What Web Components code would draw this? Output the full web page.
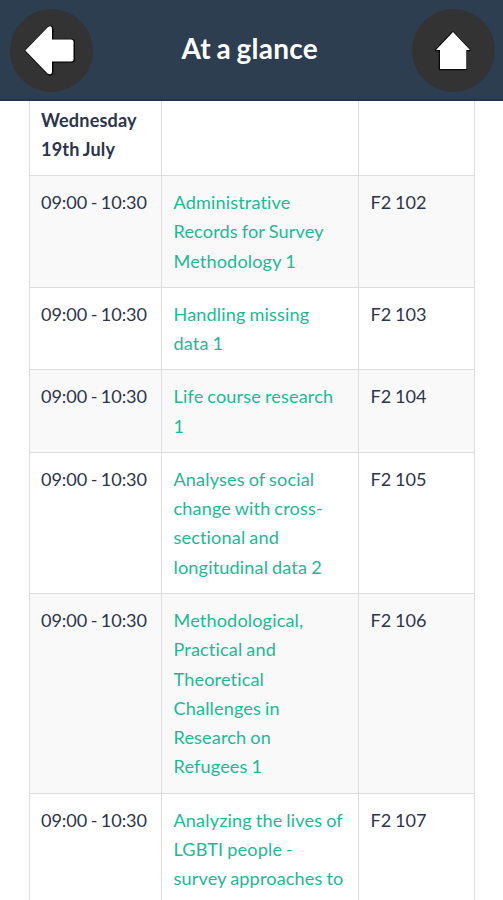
<!DOCTYPE html>
<html lang="en"><head><meta charset="utf-8"><title>At a glance</title>
<style>html,body{margin:0;height:900px;overflow:hidden;background:#fff}</style></head><body>
<glance-app></glance-app>
<script>
class RoundButton extends HTMLElement{
  constructor(){super();this.attachShadow({mode:'open'}).innerHTML=`<style>:host{display:block;width:83px;height:83px;border-radius:50%;background:#333;flex:none}svg{display:block;fill:#fff;stroke-linejoin:round}.edge{fill:#080808;stroke:#080808;stroke-width:2}</style><svg width="83" height="83" viewBox="0 0 83 83" aria-hidden="true"><path class="edge"/><path class="face"/></svg>`}
  connectedCallback(){
    const home=this.getAttribute('icon')==='home';
    this.setAttribute('role','button');
    this.setAttribute('aria-label',home?'Home':'Back');
    const d=home
      ?'M41 23L58 41H54.300V60H28V41H24Z'
      :'M15.300 41.500L37.500 18.500Q42 15.500 42 20V30.500H61Q63.500 30.500 63.500 33V50Q63.500 52.500 61 52.500H42V62Q42 67 37.500 64.500Z';
    this.shadowRoot.querySelectorAll('path').forEach(p=>p.setAttribute('d',d));
    this.shadowRoot.querySelector('.edge').setAttribute('transform',home?'translate(-.3 .2)':'translate(.5 .3)');
  }
}
customElements.define('round-button',RoundButton);
class TopBar extends HTMLElement{
  constructor(){super();this.attachShadow({mode:'open'}).innerHTML=`<style>:host{display:flex;box-sizing:border-box;height:101px;padding:9px 8px 0 9.5px;background:#2c3e50;border-bottom:2px solid #20344d;color:#fff;justify-content:space-between;flex:none}h1{margin:0 5px 0 0;font:700 28px/78px Lato,sans-serif;letter-spacing:.25px;word-spacing:-1.5px;white-space:nowrap}</style><round-button icon="back"></round-button><h1><slot></slot></h1><round-button icon="home"></round-button>`}
}
customElements.define('top-bar',TopBar);
class SessionRow extends HTMLElement{
  constructor(){super();this.attachShadow({mode:'open'}).innerHTML=`<style>:host{display:grid;grid-template-columns:132px 197px 117px;border-bottom:1px solid #ddd;letter-spacing:.15px;word-spacing:-.8px}:host([shade]){background:#f9f9f9}div{padding:11.9px 0 11px 11px;border-left:1px solid #ddd;line-height:29.3px;white-space:nowrap}:host(:not([day])) .time{letter-spacing:-.08px;word-spacing:-1px}.topic{color:#1cb994;padding-left:11.5px}div:last-child{border-right:1px solid #ddd;padding-left:11.5px;letter-spacing:0}:host([day]){font-weight:700}</style><div class="time"><slot name="time"></slot></div><div class="topic"><slot></slot></div><div><slot name="room"></slot></div>`}
}
customElements.define('session-row',SessionRow);
class GlanceApp extends HTMLElement{
  constructor(){super();
    const rows=[['Administrative<br>Records for Survey<br>Methodology 1',102],['Handling missing<br>data 1',103],['Life course research<br>1',104],['Analyses of social<br>change with cross-<br>sectional and<br>longitudinal data 2',105],['Methodological,<br>Practical and<br>Theoretical<br>Challenges in<br>Research on<br>Refugees 1',106],['Analyzing the lives of<br>LGBTI people -<br>survey approaches to',107]];
    this.attachShadow({mode:'open'}).innerHTML=`<style>:host{display:flex;flex-direction:column;height:900px;overflow:hidden;font:400 18.1px Lato,sans-serif;font-variant-ligatures:none;color:#2c354b}main{padding:0 28px 0 29px;margin-top:-7.300px}top-bar{position:relative;z-index:1}</style><top-bar>At a glance</top-bar><main><session-row day><span slot="time">Wednesday<br>19th July</span></session-row>${rows.map(([t,r],i)=>`<session-row ${i%2?'':'shade'}><span slot="time">09:00 - 10:30</span><span>${t}</span><span slot="room">F2 ${r}</span></session-row>`).join('')}</main>`}
}
customElements.define('glance-app',GlanceApp);
</script></body></html>
